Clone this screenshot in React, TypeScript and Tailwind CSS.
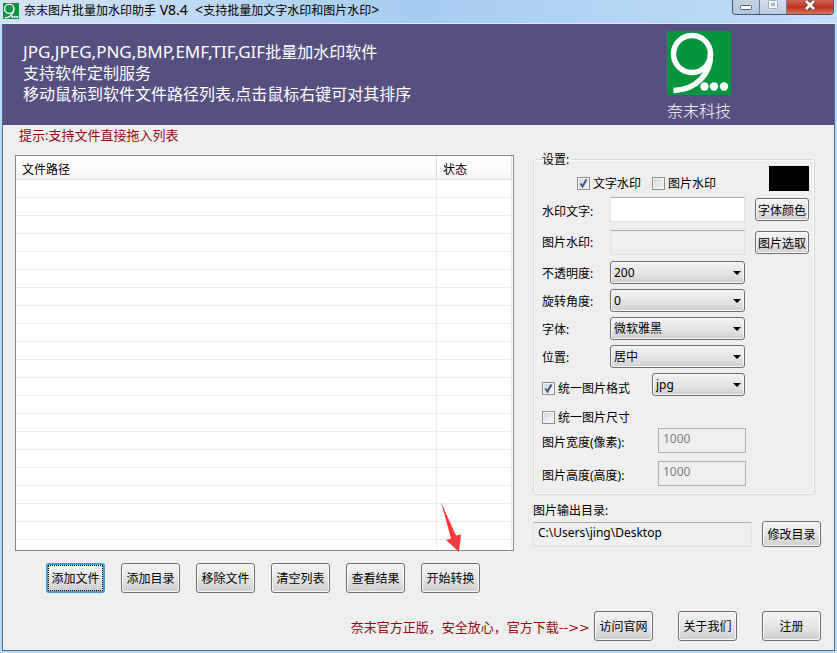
import React from 'react'

const rows = Array.from({ length: 20 }, (_, i) => i)

const actions = ['添加文件', '添加目录', '移除文件', '清空列表', '查看结果', '开始转换']

const buttonStyle =
  'shrink-0 whitespace-nowrap rounded-[3px] border border-[#707070] bg-linear-to-b from-[#f3f3f3] via-[#e6e6e6] to-[#cfcfcf] pt-0.5 text-center text-black shadow-[inset_0_0_0_1px_#fafafa]'

const fieldStyle = 'h-[25px] min-w-0 border border-[#e2e3ea] border-t-[#abadb3] px-1 outline-none'

interface LogoProps {
  className?: string
}

const Logo: React.FC<LogoProps> = ({ className }) => (
  <svg viewBox="0 0 64 64" className={className} aria-hidden="true">
    <rect width="64" height="64" fill="#06953f" />
    <circle cx="25" cy="23" r="18.5" fill="none" stroke="#fff" strokeWidth="5.5" />
    <path d="M43.500 23C44 42 30 59 6.500 59.500" fill="none" stroke="#fff" strokeWidth="5.5" />
    <circle cx="37.500" cy="55.500" r="4.200" fill="#fff" />
    <circle cx="47" cy="55.500" r="4.200" fill="#fff" />
    <circle cx="57" cy="55.500" r="4.200" fill="#fff" />
  </svg>
)

interface CheckProps {
  label: string
  checked?: boolean
}

const Check: React.FC<CheckProps> = ({ label, checked = false }) => (
  <label className="flex h-4 items-center gap-[3px] whitespace-nowrap">
    <span className="relative flex">
      <input
        type="checkbox"
        defaultChecked={checked}
        className="peer h-[13px] w-[13px] appearance-none border border-[#8e8f8f] bg-linear-to-br from-[#cfd3d9] to-[#f8f8f8] shadow-[inset_0_0_0_1px_#f4f4f4]"
      />
      <svg
        viewBox="0 0 13 13"
        className="pointer-events-none absolute inset-0 hidden h-[13px] w-[13px] peer-checked:block"
      >
        <path d="M3.500 6.500L5.500 9.500L9.500 2.500" fill="none" stroke="#40568f" strokeWidth="2" />
      </svg>
    </span>
    <span className="pt-0.5">{label}</span>
  </label>
)

interface DropdownProps {
  id: string
  value: string
  label?: string
  className: string
}

const Dropdown: React.FC<DropdownProps> = ({ id, value, label, className }) => (
  <div className={`relative h-[23px] ${className}`}>
    <select
      id={id}
      aria-label={label}
      className="block h-full w-full appearance-none rounded-[3px] border border-[#707070] bg-linear-to-b from-[#f2f2f2] via-[#e6e6e6] to-[#d0d0d0] px-[3px] shadow-[inset_0_0_0_1px_#f8f8f8]"
    >
      <option>{value}</option>
    </select>
    <svg viewBox="0 0 8 4" className="pointer-events-none absolute top-[10px] right-1 h-1 w-2">
      <path d="M0 0H8L4 4Z" fill="#000" />
    </svg>
  </div>
)

const TitleBar = () => (
  <header className="flex h-6 items-start justify-between border-b border-[#dcedfa] bg-linear-to-r from-[#d3e5f5] via-[#a6ccf0] to-[#c3def7]">
    <div className="flex items-center gap-[5px] pt-0.5 pl-[3px]">
      <Logo className="h-4 w-4" />
      <h1 className="whitespace-pre leading-4">
        奈末图片批量加水印助手
        <span className="text-sm leading-4">{' V8.4  <'}</span>
        支持批量加文字水印和图片水印
        <span className="text-sm leading-4">{'>'}</span>
      </h1>
    </div>
    <div className="mr-[3px] flex h-[15px] overflow-hidden rounded-b-[4px] border border-t-0 border-[#47586c]">
      <button
        aria-label="最小化"
        className="flex w-[27px] items-center justify-center border-r border-[#6b7f96] bg-linear-to-b from-[#c4d2e3] to-[#b0c7df]"
      >
        <svg viewBox="0 0 12 5" className="h-[5px] w-3">
          <rect x="0.500" y="0.500" width="11" height="4" rx="1" fill="#fff" stroke="#535b68" />
        </svg>
      </button>
      <button
        aria-label="最大化"
        disabled
        className="flex w-[27px] items-start justify-center border-r border-[#6b7f96] bg-linear-to-b from-[#d2deec] to-[#bccfe4]"
      >
        <svg viewBox="0 0 12 9" className="h-[9px] w-3">
          <rect x="1.500" y="0.500" width="9" height="8" rx="1" fill="#f3f6fa" stroke="#a0abb9" />
          <rect x="4.500" y="3.500" width="3" height="2" fill="#c9d5e3" stroke="#a0abb9" />
        </svg>
      </button>
      <button
        aria-label="关闭"
        className="flex w-[46px] items-start justify-center bg-linear-to-b from-[#cf6a58] via-[#bd2f1c] to-[#d4705a]"
      >
        <svg viewBox="0 0 12 10" className="h-[10px] w-3">
          <path d="M2 1L10 9M10 1L2 9" stroke="#4b3a45" strokeWidth="4.500" />
          <path d="M2 1L10 9M10 1L2 9" stroke="#fff" strokeWidth="2.800" />
        </svg>
      </button>
    </div>
  </header>
)

const Banner = () => (
  <section className="flex h-[101px] items-start justify-between bg-[#555080] text-base text-white">
    <p className="pt-[17px] pl-5 leading-[21px]">
      <span className="text-[17px]">JPG,JPEG,PNG,BMP,EMF,TIF,GIF</span>批量加水印软件
      <br />
      支持软件定制服务
      <br />
      移动鼠标到软件文件路径列表,点击鼠标右键可对其排序
    </p>
    <div className="mr-[103px] flex flex-col items-center gap-1 pt-[7px]">
      <Logo className="h-16 w-16" />
      <span className="leading-6 font-light">奈末科技</span>
    </div>
  </section>
)

const FileTable = () => (
  <div className="border border-[#828790] bg-white pr-px">
    <table className="w-full table-fixed border-separate border-spacing-0">
      <thead>
        <tr className="h-6 bg-linear-to-b from-white via-[#fcfcfc] to-[#f1f2f4] text-left">
          <th className="border-r border-b border-[#dfe0e2] p-0 pt-1 pl-1.5 font-normal">文件路径</th>
          <th className="w-[75px] border-r border-b border-[#dfe0e2] p-0 pt-1 pl-1.5 font-normal">状态</th>
        </tr>
      </thead>
      <tbody>
        {rows.map((row) => (
          <tr key={row} className="h-[18px]">
            <td className="border-r border-b border-[#ededed] p-0" />
            <td className="border-r border-b border-[#ededed] p-0" />
          </tr>
        ))}
        <tr className="h-[10px]">
          <td className="border-r border-[#ededed] p-0" />
          <td className="border-r border-[#ededed] p-0" />
        </tr>
      </tbody>
    </table>
  </div>
)

const Pointer = () => (
  <svg
    viewBox="0 0 22 52"
    className="pointer-events-none absolute bottom-full left-[19px] mb-[10px] h-[52px] w-[22px]"
  >
    <path d="M1 1L16 34.500L21 33.500L19 51L6 39L11 37.500Z" fill="#fb3a3c" />
  </svg>
)

const Settings = () => (
  <fieldset className="mr-[7px] rounded-[3px] border border-[#d5dbe0] pr-[5px] pb-2 pl-2 shadow-[inset_0_0_0_1px_#fbfbfb]">
    <legend className="h-[14px] pr-0.5 leading-4">设置:</legend>
    <div className="flex h-[31px] items-start">
      <div className="flex flex-1 gap-[11px] pt-[9px] pl-[35px]">
        <Check label="文字水印" checked />
        <Check label="图片水印" />
      </div>
      <div className="h-[25px] w-10 bg-black" />
    </div>
    <div className="flex flex-col gap-2">
      <div className="flex items-center">
        <label htmlFor="text" className="w-[68px] pt-1">
          水印文字:
        </label>
        <input id="text" type="text" className={`w-[135px] bg-white ${fieldStyle}`} />
        <button className={`ml-[10px] h-[23px] w-[54px] ${buttonStyle}`}>字体颜色</button>
      </div>
      <div className="flex items-center">
        <label htmlFor="image" className="w-[68px]">
          图片水印:
        </label>
        <input id="image" type="text" readOnly className={`w-[135px] bg-[#efefef] ${fieldStyle}`} />
        <button className={`ml-[10px] h-[23px] w-[54px] ${buttonStyle}`}>图片选取</button>
      </div>
    </div>
    <div className="flex flex-col gap-[5px] pt-1.5">
      <div className="flex items-center">
        <label htmlFor="opacity" className="w-[68px] pt-0.5">
          不透明度:
        </label>
        <Dropdown id="opacity" value="200" className="w-[135px]" />
      </div>
      <div className="flex items-center">
        <label htmlFor="angle" className="w-[68px] pt-0.5">
          旋转角度:
        </label>
        <Dropdown id="angle" value="0" className="w-[135px]" />
      </div>
      <div className="flex items-center">
        <label htmlFor="font" className="w-[68px] pt-0.5">
          字体:
        </label>
        <Dropdown id="font" value="微软雅黑" className="w-[135px]" />
      </div>
      <div className="flex items-center">
        <label htmlFor="position" className="w-[68px] pt-0.5">
          位置:
        </label>
        <Dropdown id="position" value="居中" className="w-[135px]" />
      </div>
      <div className="flex items-end">
        <div className="w-[110px]">
          <Check label="统一图片格式" checked />
        </div>
        <Dropdown id="format" label="图片格式" value="jpg" className="w-[93px]" />
      </div>
    </div>
    <div className="pt-[13px] pb-[3px]">
      <Check label="统一图片尺寸" />
    </div>
    <div className="flex flex-col gap-2">
      <div className="flex items-center">
        <label htmlFor="width" className="w-[116px] pt-1">
          图片宽度(像素):
        </label>
        <input
          id="width"
          type="text"
          disabled
          defaultValue="1000"
          className="h-[25px] w-[88px] border border-[#afafaf] px-1 pb-1 text-[#7d7d7d]"
        />
      </div>
      <div className="flex items-center">
        <label htmlFor="height" className="w-[116px] pt-1">
          图片高度(高度):
        </label>
        <input
          id="height"
          type="text"
          disabled
          defaultValue="1000"
          className="h-[25px] w-[88px] border border-[#afafaf] px-1 pb-1 text-[#7d7d7d]"
        />
      </div>
    </div>
  </fieldset>
)

const App = () => {
  return (
    <div className="flex min-h-screen flex-col bg-[#b9daf5] font-['Noto_Sans','Noto_Sans_CJK_SC',sans-serif] text-xs text-black">
      <TitleBar />
      <div className="mx-0.5 mb-0.5 flex flex-1 flex-col border border-t-0 border-[#4c6f92] bg-[#efefef]">
        <Banner />
        <main className="flex gap-[19px] px-3">
          <div className="min-w-0 flex-1">
            <p className="h-[30px] pl-1 text-[13px] leading-5 text-[#960b10]">提示:支持文件直接拖入列表</p>
            <FileTable />
            <div className="flex gap-4 pt-3 pl-[31px]">
              {actions.map((action, i) => (
                <div key={action} className="relative">
                  {i === 0 ? (
                    <button className="h-[30px] w-[59px] rounded-[3px] border-2 border-[#3c9fd0] bg-linear-to-b from-[#f0f2f3] via-[#e4e6e7] to-[#cccfd1] pt-0.5 whitespace-nowrap outline-1 -outline-offset-3 outline-dotted outline-black">
                      {action}
                    </button>
                  ) : (
                    <button className={`h-[30px] w-[59px] ${buttonStyle}`}>{action}</button>
                  )}
                  {i === actions.length - 1 && <Pointer />}
                </div>
              ))}
            </div>
          </div>
          <div className="w-[289px] shrink-0 pt-[27px]">
            <Settings />
            <div className="flex items-end justify-between pt-2 pr-px">
              <div className="w-[219px]">
                <label htmlFor="output" className="block pb-[3px] leading-4">
                  图片输出目录:
                </label>
                <input
                  id="output"
                  type="text"
                  readOnly
                  defaultValue="C:\Users\jing\Desktop"
                  className={`w-full bg-[#efefef] pb-1 ${fieldStyle}`}
                />
              </div>
              <button className={`h-[26px] w-[59px] ${buttonStyle}`}>修改目录</button>
            </div>
          </div>
        </main>
        <footer className="mt-auto flex items-center justify-end gap-[25px] pr-[13px] pb-[9px] pl-3">
          <div className="flex items-center gap-1">
            <a href="#download" className="pt-1 text-[13px] text-[#960b10]">
              奈末官方正版，安全放心，官方下载
              <span className="font-['DejaVu_Sans',sans-serif]">--&gt;&gt;</span>
            </a>
            <button className={`h-[30px] w-[59px] ${buttonStyle}`}>访问官网</button>
          </div>
          <button className={`h-[30px] w-[59px] ${buttonStyle}`}>关于我们</button>
          <button className={`h-[30px] w-[59px] ${buttonStyle}`}>注册</button>
        </footer>
      </div>
    </div>
  )
}

export default App
